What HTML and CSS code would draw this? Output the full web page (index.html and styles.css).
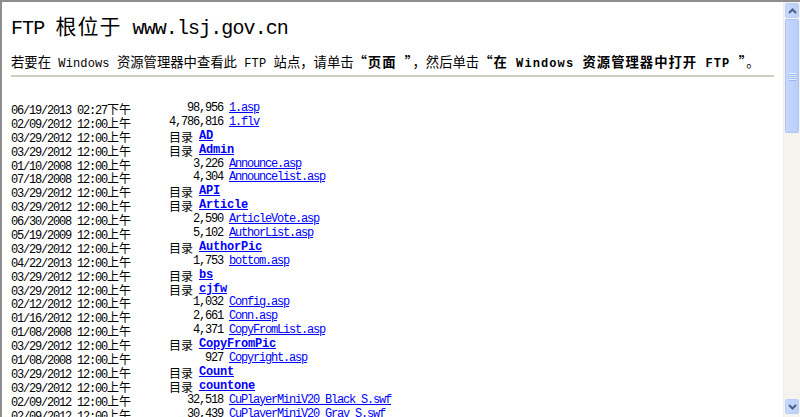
FILE: index.html
```html
<!DOCTYPE html>
<html lang="zh-CN">
<head>
<meta charset="utf-8">
<title>FTP 根位于 www.lsj.gov.cn</title>
<link rel="stylesheet" href="styles.css">
</head>
<body>
<div class="window">
  <div class="content">
    <h1 class="title"><span class="l">FTP </span><span class="c">根位于</span><span class="l"> www.lsj.gov.cn</span></h1>
    <p class="intro"><span class="c">若要在</span><span class="l"> Windows </span><span class="c">资源管理器中查看此</span><span class="l"> FTP </span><span class="c">站点，请单击</span><b class="bb"><span class="c">“页面</span><span class="l"> </span><span class="c q">”</span></b><span class="c">，然后单击</span><b class="bb"><span class="c">“在</span><span class="l"> Windows </span><span class="c">资源管理器中打开</span><span class="l"> FTP </span><span class="c q">”</span></b><span class="c">。</span></p>
    <hr class="rule">
    <div class="listing">
      <div class="row"><span class="date">06/19/2013 02:27<span class="c">下午</span></span><span class="size">98,956</span><a class="file" href="#">1.asp</a></div>
      <div class="row"><span class="date">02/09/2012 12:00<span class="c">上午</span></span><span class="size">4,786,816</span><a class="file" href="#">1.flv</a></div>
      <div class="row"><span class="date">03/29/2012 12:00<span class="c">上午</span></span><span class="dir"><span class="c">目录</span><a class="folder" href="#">AD</a></span></div>
      <div class="row"><span class="date">03/29/2012 12:00<span class="c">上午</span></span><span class="dir"><span class="c">目录</span><a class="folder" href="#">Admin</a></span></div>
      <div class="row"><span class="date">01/10/2008 12:00<span class="c">上午</span></span><span class="size">3,226</span><a class="file" href="#">Announce.asp</a></div>
      <div class="row"><span class="date">07/18/2008 12:00<span class="c">上午</span></span><span class="size">4,304</span><a class="file" href="#">Announcelist.asp</a></div>
      <div class="row"><span class="date">03/29/2012 12:00<span class="c">上午</span></span><span class="dir"><span class="c">目录</span><a class="folder" href="#">API</a></span></div>
      <div class="row"><span class="date">03/29/2012 12:00<span class="c">上午</span></span><span class="dir"><span class="c">目录</span><a class="folder" href="#">Article</a></span></div>
      <div class="row"><span class="date">06/30/2008 12:00<span class="c">上午</span></span><span class="size">2,590</span><a class="file" href="#">ArticleVote.asp</a></div>
      <div class="row"><span class="date">05/19/2009 12:00<span class="c">上午</span></span><span class="size">5,102</span><a class="file" href="#">AuthorList.asp</a></div>
      <div class="row"><span class="date">03/29/2012 12:00<span class="c">上午</span></span><span class="dir"><span class="c">目录</span><a class="folder" href="#">AuthorPic</a></span></div>
      <div class="row"><span class="date">04/22/2013 12:00<span class="c">上午</span></span><span class="size">1,753</span><a class="file" href="#">bottom.asp</a></div>
      <div class="row"><span class="date">03/29/2012 12:00<span class="c">上午</span></span><span class="dir"><span class="c">目录</span><a class="folder" href="#">bs</a></span></div>
      <div class="row"><span class="date">03/29/2012 12:00<span class="c">上午</span></span><span class="dir"><span class="c">目录</span><a class="folder" href="#">cjfw</a></span></div>
      <div class="row"><span class="date">02/12/2012 12:00<span class="c">上午</span></span><span class="size">1,032</span><a class="file" href="#">Config.asp</a></div>
      <div class="row"><span class="date">01/16/2012 12:00<span class="c">上午</span></span><span class="size">2,661</span><a class="file" href="#">Conn.asp</a></div>
      <div class="row"><span class="date">01/08/2008 12:00<span class="c">上午</span></span><span class="size">4,371</span><a class="file" href="#">CopyFromList.asp</a></div>
      <div class="row"><span class="date">03/29/2012 12:00<span class="c">上午</span></span><span class="dir"><span class="c">目录</span><a class="folder" href="#">CopyFromPic</a></span></div>
      <div class="row"><span class="date">01/08/2008 12:00<span class="c">上午</span></span><span class="size">927</span><a class="file" href="#">Copyright.asp</a></div>
      <div class="row"><span class="date">03/29/2012 12:00<span class="c">上午</span></span><span class="dir"><span class="c">目录</span><a class="folder" href="#">Count</a></span></div>
      <div class="row"><span class="date">03/29/2012 12:00<span class="c">上午</span></span><span class="dir"><span class="c">目录</span><a class="folder" href="#">countone</a></span></div>
      <div class="row"><span class="date">02/09/2012 12:00<span class="c">上午</span></span><span class="size">32,518</span><a class="file" href="#">CuPlayerMiniV20_Black_S.swf</a></div>
      <div class="row"><span class="date">02/09/2012 12:00<span class="c">上午</span></span><span class="size">30,439</span><a class="file" href="#">CuPlayerMiniV20_Gray_S.swf</a></div>
    </div>
  </div>
  <div class="scrollbar">
    <div class="sb-btn"><svg width="9" height="6" viewBox="0 0 9 6"><path d="M1 5 L4.5 1.5 L8 5" fill="none" stroke="#4d6185" stroke-width="2"/></svg></div>
    <div class="sb-thumb"><span class="grip"></span><span class="grip"></span><span class="grip"></span><span class="grip"></span></div>
    <div class="sb-track"></div>
    <div class="sb-btn"><svg width="9" height="6" viewBox="0 0 9 6"><path d="M1 1 L4.5 4.5 L8 1" fill="none" stroke="#4d6185" stroke-width="2"/></svg></div>
  </div>
</div>
</body>
</html>
```

FILE: styles.css
```css
* { box-sizing: border-box; }
html, body { margin: 0; padding: 0; height: 100%; overflow: hidden; background: #fff; }

.window {
  width: 800px;
  height: 417px;
  display: flex;
  border-top: 2px solid #8e8e8e;
  border-left: 2px solid #8e8e8e;
  background: #fff;
  color: #000;
  font-family: "Liberation Mono", "Noto Sans CJK SC", monospace;
}

.content {
  flex: 1;
  min-width: 0;
  overflow: hidden;
  padding: 10px 9px 0 9px;
}

.c { font-family: "Noto Sans CJK SC", sans-serif; letter-spacing: 0; }
.l { font-family: "Liberation Mono", monospace; }

.title {
  margin: 0 0 16px;
  height: 26px;
  font-weight: normal;
  font-size: 22px;
  line-height: 26px;
  white-space: nowrap;
}
.title .l { font-size: 20px; letter-spacing: -0.9px; }
.title .c { font-size: 21px; letter-spacing: 1px; }

.intro {
  margin: 0;
  height: 16px;
  font-size: 13.33px;
  line-height: 16px;
  white-space: nowrap;
}
.intro .l { font-size: 12px; letter-spacing: 0.13px; }
.intro .bb { font-weight: bold; letter-spacing: 1px; }
.intro .bb .l { letter-spacing: 1.1px; }
.intro .bb .c { letter-spacing: 1px; }

.rule {
  margin: 5px 0 0 0;
  height: 2px;
  border: 0;
  background: #cfcfbf;
}

.listing {
  margin-top: 25px;
  font-size: 12px;
  line-height: 13.9px;
  letter-spacing: -1.2px;
  white-space: nowrap;
}

.row {
  display: grid;
  grid-template-columns: 152px 54px auto;
  column-gap: 6px;
  height: 13.9px;
}
.row .c { font-size: 12px; }

.size { text-align: right; }

.dir { grid-column: 2 / 4; display: flex; gap: 6px; }

a { color: #0000ff; text-decoration: underline; }
.folder { font-weight: bold; letter-spacing: -0.2px; }

.scrollbar {
  width: 17px;
  flex: none;
  display: flex;
  flex-direction: column;
  padding: 1px 1px 3px 1px;
  background: #f4f3ee;
  border-left: 1px solid #f0efea;
}

.sb-btn {
  height: 15px;
  flex: none;
  display: flex;
  align-items: center;
  justify-content: center;
  background: linear-gradient(to right, #c9d9fd, #bccffb);
  border: 1px solid #b9cdf8;
  border-radius: 2px;
}

.sb-thumb {
  height: 114px;
  flex: none;
  margin-top: 1px;
  display: flex;
  flex-direction: column;
  align-items: center;
  justify-content: center;
  gap: 1px;
  background: linear-gradient(to right, #c6d7fd, #b9cefb);
  border: 1px solid #aec4f4;
  border-radius: 2px;
}
.grip { width: 7px; height: 1px; background: #e9f0fe; box-shadow: 0 1px 0 #98b6f3; }

.sb-track { flex: 1; }
```
